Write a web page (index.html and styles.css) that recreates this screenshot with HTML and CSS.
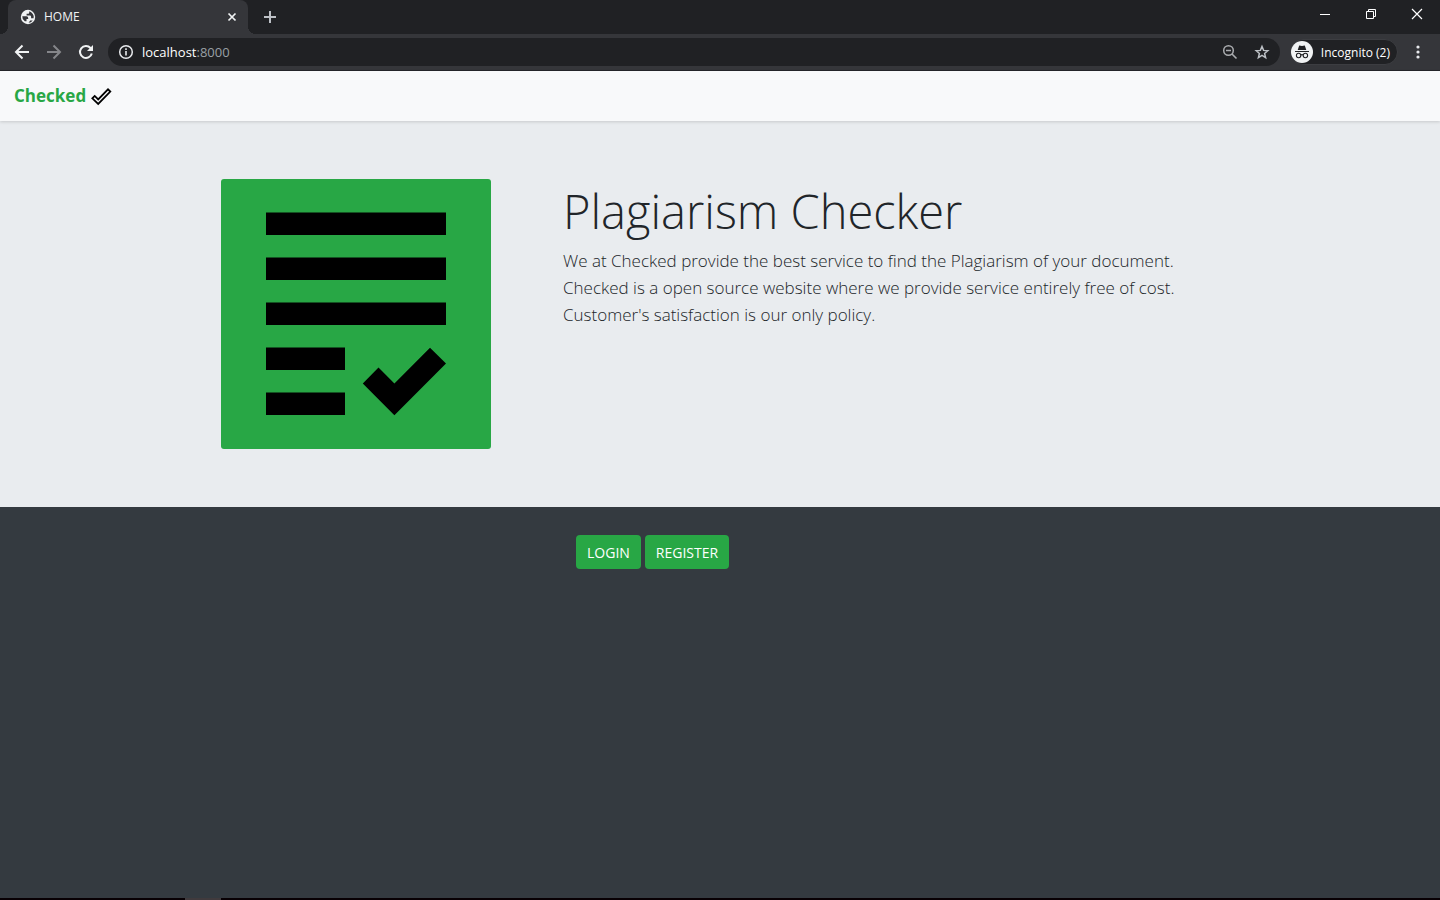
FILE: index.html
```html
<!DOCTYPE html>
<html lang="en">
<head>
<meta charset="utf-8">
<meta name="viewport" content="width=device-width, initial-scale=1">
<title>HOME</title>
<link rel="stylesheet" href="styles.css">
</head>
<body>
<header class="browser">
  <div class="tab-strip">
    <div class="tab">
      <svg class="icon" width="16" height="16" viewBox="0 0 16 16" aria-hidden="true"><circle cx="8" cy="8" r="7.2" fill="#f1f3f4"/><path d="M2.300 7.200h4.200q1.700 0 1.700 1.700v1h-1.700v2.300H4.800Q2 10.300 2.300 7.200ZM9.200 2.300v1.500q0 1-1 1H6.600v1.800h3.300q1.200 0 1.200 1.200v1.500h2.500q.6-2.600-.8-4.400T9.200 2.300ZM8.600 13.700l1.600-2.200h2.500q-1.600 2.200-4.100 2.200Z" fill="#35363a"/></svg>
      <span class="tab-title">HOME</span>
      <button class="plain" aria-label="Close tab"><svg width="16" height="16" viewBox="0 0 16 16"><path d="m4.500 4.500 7 7m0-7-7 7" stroke="#f1f3f4" stroke-width="1.700"/></svg></button>
    </div>
    <button class="plain new-tab" aria-label="New tab"><svg width="16" height="16" viewBox="0 0 16 16"><path d="M8 2v12M2 8h12" stroke="#bdc1c6" stroke-width="2"/></svg></button>
    <div class="window-controls">
      <button class="plain window-button" aria-label="Minimize"><svg width="12" height="12" viewBox="0 0 12 12"><path d="M1 6.500h10" stroke="#fff"/></svg></button>
      <button class="plain window-button" aria-label="Restore"><svg width="12" height="12" viewBox="0 0 12 12"><path d="M1.500 3.500h7v7h-7ZM3.500 3.500v-2h7v7h-2" fill="none" stroke="#fff"/></svg></button>
      <button class="plain window-button" aria-label="Close"><svg width="12" height="12" viewBox="0 0 12 12"><path d="m1 1 10 10m0-10L1 11" stroke="#fff" stroke-width="1.200"/></svg></button>
    </div>
  </div>
  <div class="toolbar">
    <button class="plain nav-button" aria-label="Back"><svg width="16" height="16" viewBox="0 0 16 16"><path d="M15 8H2m6.500-6.500L2 8l6.500 6.500" fill="none" stroke="#f1f3f4" stroke-width="2"/></svg></button>
    <button class="plain nav-button" aria-label="Forward"><svg width="16" height="16" viewBox="0 0 16 16"><path d="M1 8h13M7.500 1.500 14 8l-6.500 6.500" fill="none" stroke="#85868a" stroke-width="2"/></svg></button>
    <button class="plain nav-button" aria-label="Reload"><svg width="16" height="16" viewBox="0 0 16 16"><path d="M13.800 9.500A6 6 0 1 1 12.500 4l1 1" fill="none" stroke="#f1f3f4" stroke-width="2"/><path d="M15 1v6H9Z" fill="#f1f3f4"/></svg></button>
    <div class="address-bar">
      <svg class="icon" width="16" height="16" viewBox="0 0 16 16" aria-hidden="true"><circle cx="8" cy="8" r="6.300" fill="none" stroke="#e8eaed" stroke-width="1.500"/><path d="M8 7v4.500M8 4.300V6" stroke="#e8eaed" stroke-width="1.600"/></svg>
      <span class="address"><span class="host">localhost</span>:8000</span>
      <button class="plain" aria-label="Zoom"><svg width="16" height="16" viewBox="0 0 16 16"><circle cx="6.500" cy="6.500" r="4.800" fill="none" stroke="#aaacaf" stroke-width="1.500"/><path d="m10 10 4.500 4.500M4 6.500h5" stroke="#aaacaf" stroke-width="1.600"/></svg></button>
      <button class="plain" aria-label="Bookmark this page"><svg width="16" height="16" viewBox="0 0 16 16"><path d="m8 2.500 1.600 3.900 4.200.3-3.200 2.800 1 4.100L8 11.400l-3.600 2.200 1-4.100-3.200-2.800 4.200-.3Z" fill="none" stroke="#bdc1c6" stroke-width="1.500"/></svg></button>
    </div>
    <button class="incognito"><svg width="22" height="22" viewBox="0 0 22 22" aria-hidden="true"><circle cx="11" cy="11" r="11" fill="#f1f3f4"/><path d="M8.200 4.500 11 5l2.800-.5 1.500 4.500H6.700ZM4 10h14v1H4Z" fill="#202124"/><g fill="none" stroke="#202124" stroke-width="1.100"><circle cx="7.600" cy="14.500" r="2.200"/><circle cx="14.400" cy="14.500" r="2.200"/><path d="M9.800 14q1.200-.8 2.400 0"/></g></svg><span>Incognito (2)</span></button>
    <button class="plain menu-button" aria-label="Menu"><svg width="16" height="16" viewBox="0 0 16 16" fill="#e8eaed"><circle cx="8" cy="3" r="1.600"/><circle cx="8" cy="8" r="1.600"/><circle cx="8" cy="13" r="1.600"/></svg></button>
  </div>
</header>
<nav class="navbar">
  <a class="brand" href="#">Checked <svg width="22" height="22" viewBox="0 0 22 22" aria-hidden="true"><path d="m2.300 13.300 2.400-2.400 3.500 3.500L18 4.300l2.300 2.300L8.200 19Z" fill="#f8f9fa" stroke="#000" stroke-width="1.800"/></svg></a>
</nav>
<main>
  <section class="hero">
    <svg class="artwork" viewBox="0 0 270 270" role="img" aria-label="Checked document"><path d="M45 33.500h180V56H45ZM45 78.500h180V101H45ZM45 123.500h180V146H45ZM45 168.500h79V191H45ZM45 213.500h79V236H45ZM141.800 204.500l15.700-16 15.900 16 35.600-35.700 16 15.700-51.600 51.700Z"/></svg>
    <div class="intro">
      <h1>Plagiarism Checker</h1>
      <p>We at Checked provide the best service to find the Plagiarism of your document.<br>Checked is a open source website where we provide service entirely free of cost.<br>Customer's satisfaction is our only policy.</p>
    </div>
  </section>
  <section class="actions">
    <button class="action">LOGIN</button>
    <button class="action">REGISTER</button>
  </section>
</main>
<footer class="taskbar"><span class="task"></span></footer>
</body>
</html>
```
FILE: styles.css
```css
* { box-sizing: border-box; }
body {
  margin: 0;
  min-height: 100vh;
  display: flex;
  flex-direction: column;
  background: #343a40;
  color: #212529;
  font-family: "Open Sans", "Noto Sans", sans-serif;
}
button { font: inherit; cursor: pointer; }
svg { display: block; flex: none; }
.plain {
  display: grid;
  place-items: center;
  padding: 0;
  border: 0;
  background: none;
}
.browser { background: #35363a; border-bottom: 1px solid #242529; }
.tab-strip {
  display: flex;
  height: 34px;
  padding-left: 8px;
  background: #202124;
}
.tab {
  position: relative;
  display: flex;
  align-items: center;
  gap: 8px;
  width: 240px;
  padding: 0 8px 0 12px;
  border-radius: 8px 8px 0 0;
  background: #35363a;
  color: #f1f3f4;
  font-size: 12px;
}
.tab::before,
.tab::after {
  content: "";
  position: absolute;
  bottom: 0;
  width: 8px;
  height: 8px;
}
.tab::before {
  right: 100%;
  background: radial-gradient(circle at 0 0, #202124 8px, #35363a 8px);
}
.tab::after {
  left: 100%;
  background: radial-gradient(circle at 100% 0, #202124 8px, #35363a 8px);
}
.tab-title { flex: 1; padding-bottom: 2px; }
.new-tab { width: 44px; }
.window-controls { display: flex; margin-left: auto; height: 28px; }
.window-button { width: 46px; }
.toolbar {
  display: flex;
  align-items: center;
  height: 36px;
  padding: 0 10px 0 6px;
}
.nav-button { width: 32px; height: 28px; }
.address-bar {
  flex: 1;
  display: flex;
  align-items: center;
  gap: 16px;
  height: 28px;
  margin: 0 10px 0 6px;
  padding: 0 10px;
  border-radius: 14px;
  background: #202124;
}
.address { flex: 1; margin-left: -8px; color: #9aa0a6; font-size: 13px; }
.host { color: #fff; }
.incognito {
  display: flex;
  align-items: center;
  gap: 8px;
  height: 26px;
  padding: 0 7px 0 0;
  border: 1px solid #3c3d41;
  border-radius: 13px;
  background: #202124;
  color: #fff;
  font-size: 12px;
  white-space: nowrap;
}
.menu-button { width: 24px; margin-left: 8px; }
.navbar {
  position: relative;
  padding: 12px 14px;
  background: #f8f9fa;
  box-shadow: 0 1px 3px rgba(0, 0, 0, .15);
}
.brand {
  display: flex;
  align-items: center;
  gap: 4px;
  width: fit-content;
  color: #28a745;
  font-size: 17px;
  font-weight: 700;
  line-height: 26px;
  text-decoration: none;
}
.hero {
  display: flex;
  gap: 72px;
  padding: 58px 15%;
  padding-left: 221px;
  background: #e9ecef;
}
.artwork { width: 270px; border-radius: 3px; background: #28a745; }
h1 {
  margin: 0 0 4px;
  font-size: 47px;
  font-weight: 300;
  line-height: 64px;
}
p { margin: 0; font-size: 17px; font-weight: 300; line-height: 27px; white-space: nowrap; }
.actions {
  display: flex;
  gap: 4px;
  padding: 28px 40%;
}
.action {
  height: 34px;
  padding: 0 11px;
  border: 0;
  border-radius: 4px;
  background: #28a745;
  color: #fff;
  font-size: 14px;
}
.taskbar { height: 2px; margin-top: auto; padding-left: 185px; background: #080004; }
.task { display: block; width: 36px; height: 2px; background: #403a3d; }
```
